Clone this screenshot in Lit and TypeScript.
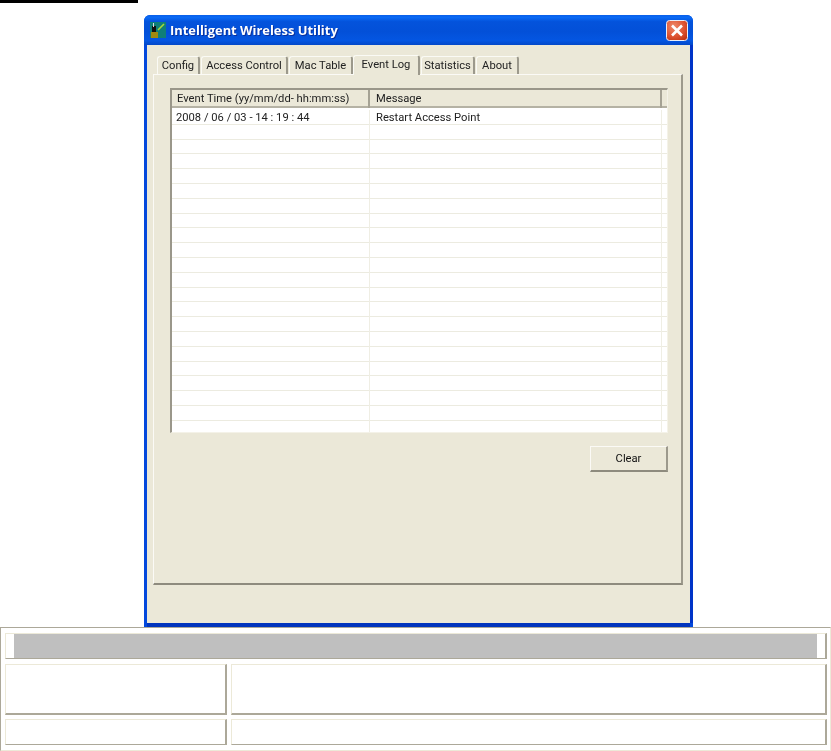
import { LitElement, html, css } from "lit";
import { customElement } from "lit/decorators.js";

const TABS = [
  { label: "Config", w: 43, gap: 1 },
  { label: "Access Control", w: 87, gap: 1 },
  { label: "Mac Table", w: 64, gap: 0 },
  { label: "Event Log", w: 67, gap: 1, active: true },
  { label: "Statistics", w: 54, gap: 1 },
  { label: "About", w: 43, gap: 0 },
];

@customElement("app-root")
export class AppRoot extends LitElement {
  static styles = css`
    :host { display: block; width: 831px; height: 751px; overflow: hidden; background: #fff; font-family: Roboto, "Liberation Sans", Arial, sans-serif; }
    .page { display: flex; flex-direction: column; }
    .rule { width: 138px; height: 3px; background: #000; margin-bottom: 12px; }
    .window { width: 549px; height: 612px; margin-left: 144px; box-sizing: border-box; display: flex; flex-direction: column; border-radius: 6px 6px 0 0; background: #0348dc; overflow: hidden; }
    .title { height: 30px; flex: none; display: flex; align-items: center; padding: 0 5px 0 6px; gap: 4px; background: linear-gradient(180deg, #0a5fe8 0%, #0a6af5 8%, #0453dc 22%, #0350d8 55%, #0456e2 85%, #0348c8 100%); }
    .title svg.ic { width: 16px; height: 16px; flex: none; }
    .title span { flex: 1; color: #fff; font-family: "Open Sans", "Liberation Sans", sans-serif; font-weight: 700; font-size: 12.9px; text-shadow: 1px 1px 0 #0a2f9c; filter: blur(0.3px); }
    .close { width: 22px; height: 21px; flex: none; display: block; }
    .client { flex: 1; margin: 0 3px 4px 3px; background: #ebe8d8; padding: 10px 7px 0 6px; box-sizing: border-box; min-height: 0; box-shadow: 0 4px 0 #0034bd, 3px 0 0 #0034c8; }
    .tabs { display: flex; height: 19px; padding-left: 4px; align-items: flex-end; position: relative; z-index: 1; }
    .tab { box-sizing: border-box; height: 18px; font-size: 11.2px; color: #222; display: flex; align-items: center; justify-content: center; background: #ebe8d8; border-top: 1px solid #fafaf5; border-left: 1px solid #fafaf5; border-right: 2px solid #9c998c; border-radius: 3px 3px 0 0; filter: blur(0.25px); }
    .tab.active { height: 20px; margin-bottom: -1px; padding-bottom: 3px; }
    .panel { box-sizing: border-box; height: 511px; background: #ebe8d8; border-top: 1px solid #fbfaf6; border-left: 1px solid #fbfaf6; border-right: 2px solid #9c998c; border-bottom: 2px solid #8e8b7e; padding: 13px 14px 0 16px; display: flex; flex-direction: column; }
    .list { box-sizing: border-box; width: 498px; height: 345px; background: #fff; border-top: 2px solid #9a978a; border-left: 2px solid #9a978a; border-right: 1px solid #f4f2e8; border-bottom: 1px solid #f4f2e8; display: flex; flex-direction: column; overflow: hidden; }
    .cols { display: grid; grid-template-columns: 198px 292px 1fr; }
    .head { box-sizing: border-box; height: 18px; flex: none; margin-bottom: 2px; background: #ebe8d8; border-bottom: 2px solid #b5b2a4; }
    .head div { font-size: 11.2px; color: #222; padding-left: 5px; line-height: 18px; border-right: 2px solid #a5a294; filter: blur(0.25px); }
    .head div + div { padding-left: 6px; }
    .head div:last-child { border-right: 0; padding: 0; }
    .row { height: 14.8px; box-sizing: border-box; border-bottom: 1px solid #ecebe0; }
    .row div { border-right: 1px solid #efeee4; height: 14.8px; font-size: 11.2px; color: #222; line-height: 15px; padding-left: 4px; white-space: nowrap; filter: blur(0.25px); }
    .row div + div { padding-left: 6px; }
    .row div:last-child { border-right: 0; padding: 0; }
    .actions { display: flex; justify-content: flex-end; padding-top: 13px; width: 498px; }
    .btn { box-sizing: border-box; width: 78px; height: 26px; background: #ebe8d8; border-top: 1px solid #fbfaf6; border-left: 1px solid #fbfaf6; border-right: 2px solid #9c998c; border-bottom: 2px solid #8e8b7e; font-size: 11.2px; color: #111; display: flex; align-items: center; justify-content: center; filter: blur(0.25px); }

    .table { box-sizing: border-box; width: 831px; height: 124px; border: 1px solid; border-color: #aca899 #ece9d8 #ece9d8 #aca899; padding: 5px 3px 5px 4px; display: grid; grid-template-columns: 222px 596px; grid-template-rows: 26px 52px 26px; gap: 4px; }
    .cell { box-sizing: border-box; background: #fff; border-top: 1px solid #ece9d8; border-left: 1px solid #ece9d8; border-right: 2px solid #aca899; border-bottom: 2px solid #aca899; }
    .cell.one { grid-column: 1 / -1; padding: 0 8px; border-bottom-width: 1px; }
    .cell.tall { margin-top: 1px; }
    .cell.thin { border-bottom-width: 1px; }
    .bar { height: 100%; background: #bfbfbf; }
  `;

  render() {
    const rows = Array.from({ length: 22 }, (_, i) => i);
    return html`
      <div class="page">
        <div class="rule"></div>
        <div class="window">
          <div class="title">
            <svg class="ic" viewBox="0 0 16 16">
              <rect width="16" height="16" fill="#0f7f78" />
              <path d="M8 8 L14 2" stroke="#a8d93a" stroke-width="1.6" />
              <rect x="2" y="4" width="4" height="7" fill="#111" />
              <rect x="1" y="10" width="7" height="6" fill="#a08a10" />
              <rect x="3" y="1" width="1" height="4" fill="#ddd" />
            </svg>
            <span>Intelligent Wireless Utility</span>
            <svg class="close" viewBox="0 0 22 21">
              <defs>
                <radialGradient id="cg" cx="35%" cy="30%" r="85%">
                  <stop offset="0" stop-color="#ee8a6c" />
                  <stop offset="0.6" stop-color="#dd5230" />
                  <stop offset="1" stop-color="#bd3110" />
                </radialGradient>
              </defs>
              <rect x="0.5" y="0.5" width="21" height="20" rx="3" fill="url(#cg)" stroke="#e9eef9" />
              <path d="M6 5.5 L16 15.5 M16 5.5 L6 15.5" stroke="#fff" stroke-width="2.6" />
            </svg>
          </div>
          <div class="client">
            <div class="tabs">
              ${TABS.map(
                (t) => html`<div class="tab ${t.active ? "active" : ""}" style="width:${t.w}px;margin-right:${t.gap}px">${t.label}</div>`
              )}
            </div>
            <div class="panel">
              <div class="list">
                <div class="cols head">
                  <div>Event Time (yy/mm/dd- hh:mm:ss)</div>
                  <div>Message</div>
                  <div></div>
                </div>
                ${rows.map(
                  (i) => html`<div class="cols row">
                    <div>${i === 0 ? "2008 / 06 / 03 - 14 : 19 : 44" : ""}</div>
                    <div>${i === 0 ? "Restart Access Point" : ""}</div>
                    <div></div>
                  </div>`
                )}
              </div>
              <div class="actions"><div class="btn">Clear</div></div>
            </div>
          </div>
        </div>
        <div class="table">
          <div class="cell one"><div class="bar"></div></div>
          <div class="cell tall"></div>
          <div class="cell tall"></div>
          <div class="cell thin"></div>
          <div class="cell thin"></div>
        </div>
      </div>
    `;
  }
}
